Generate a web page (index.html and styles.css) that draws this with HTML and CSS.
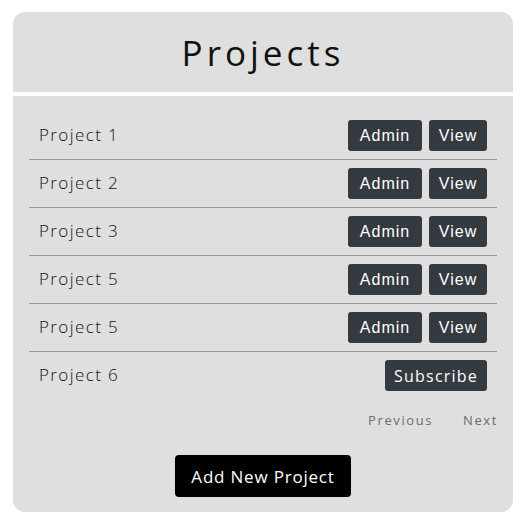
FILE: index.html
```html
<!DOCTYPE html>
<html>
<head>
<meta charset="utf-8">
<link rel="stylesheet" href="styles.css">
</head>
<body>
<div class="card">
  <div class="card-header"><h1 class="title">Projects</h1></div>
  <div class="card-body">
    <ul class="list">
      <li class="row"><span class="name">Project 1</span><span class="actions"><button class="btn btn-admin">Admin</button><button class="btn btn-view">View</button></span></li>
      <li class="row"><span class="name">Project 2</span><span class="actions"><button class="btn btn-admin">Admin</button><button class="btn btn-view">View</button></span></li>
      <li class="row"><span class="name">Project 3</span><span class="actions"><button class="btn btn-admin">Admin</button><button class="btn btn-view">View</button></span></li>
      <li class="row"><span class="name">Project 5</span><span class="actions"><button class="btn btn-admin">Admin</button><button class="btn btn-view">View</button></span></li>
      <li class="row"><span class="name">Project 5</span><span class="actions"><button class="btn btn-admin">Admin</button><button class="btn btn-view">View</button></span></li>
      <li class="row"><span class="name">Project 6</span><span class="actions"><button class="btn btn-sub">Subscribe</button></span></li>
    </ul>
    <div class="pager"><a class="page-link">Previous</a><a class="page-link">Next</a></div>
    <div class="add-wrap"><button class="btn-add">Add New Project</button></div>
  </div>
</div>
</body>
</html>
```
FILE: styles.css
```css
* { box-sizing: border-box; }
body {
  margin: 0;
  background: #ffffff;
  font-family: "Open Sans", sans-serif;
}
.card {
  margin: 12px 0 0 13px;
  width: 500px;
  height: 500px;
  background: #dfdfdf;
  border-radius: 12px;
  overflow: hidden;
}
.card-header {
  height: 84px;
  border-bottom: 4px solid #ffffff;
  display: flex;
  align-items: center;
  justify-content: center;
}
.title {
  margin: 0;
  font-family: "Open Sans", sans-serif;
  font-weight: 400;
  font-size: 35px;
  letter-spacing: 4px;
  color: #111;
}
.card-body {
  padding: 16px 16px 0 16px;
}
.list {
  list-style: none;
  margin: 0;
  padding: 0;
}
.row {
  height: 48px;
  border-bottom: 1px solid #999999;
  display: flex;
  align-items: center;
  justify-content: space-between;
  padding: 0 10px 0 10px;
}
.row:last-child { border-bottom: none; height: 47px; }
.name {
  font-size: 17px;
  font-weight: 300;
  letter-spacing: 1.4px;
  color: #111;
  padding-bottom: 3px;
}
.actions {
  display: flex;
  gap: 7px;
}
.btn {
  height: 31px;
  border: none;
  border-radius: 3px;
  background: #343a40;
  color: #ffffff;
  font-size: 16px;
  letter-spacing: 1px;
  padding: 0;
}
.btn-admin { width: 74px; font-family: "Liberation Sans", Arial, sans-serif; }
.btn-view { width: 58px; font-family: "Liberation Sans", Arial, sans-serif; }
.btn-sub { width: 102px; font-family: "Open Sans", sans-serif; letter-spacing: 1.2px; }
.pager {
  height: 42px;
  display: flex;
  justify-content: flex-end;
  align-items: center;
  gap: 30px;
  margin-right: -1px;
}
.page-link {
  font-size: 13px;
  letter-spacing: 1.6px;
  color: #6c6c6c;
}
.add-wrap {
  display: flex;
  justify-content: center;
  margin-top: 14px;
}
.btn-add {
  width: 176px;
  height: 42px;
  border: none;
  border-radius: 4px;
  background: #000000;
  color: #ffffff;
  font-family: "Open Sans", sans-serif;
  font-size: 17px;
  letter-spacing: 0.8px;
  padding: 0;
}
```
